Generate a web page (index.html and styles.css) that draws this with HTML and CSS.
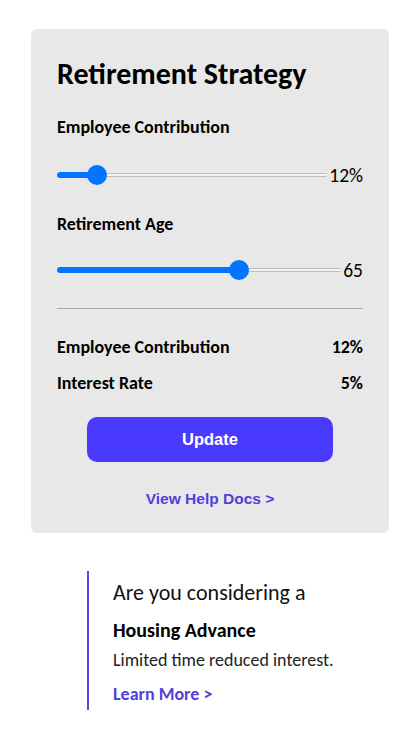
FILE: index.html
```html
<!DOCTYPE html>
<html lang="en">
<head>
<meta charset="utf-8">
<title>Retirement Strategy</title>
<link rel="stylesheet" href="styles.css">
</head>
<body>
  <section class="card">
    <h1 class="title">Retirement Strategy</h1>
    <label class="label label-first" for="contrib">Employee Contribution</label>
    <div class="slider-row slider-first">
      <input class="range" id="contrib" type="range" min="0" max="100" value="12" style="--fill: 12%">
      <span class="value">12%</span>
    </div>
    <label class="label label-second" for="age">Retirement Age</label>
    <div class="slider-row slider-second">
      <input class="range" id="age" type="range" min="0" max="100" value="65" style="--fill: 65%">
      <span class="value">65</span>
    </div>
    <hr class="divider">
    <div class="summary-row summary-first"><span>Employee Contribution</span><span>12%</span></div>
    <div class="summary-row summary-second"><span>Interest Rate</span><span>5%</span></div>
    <button class="update" type="button">Update</button>
    <a class="help" href="#">View Help Docs &gt;</a>
  </section>

  <aside class="promo">
    <p class="promo-lead">Are you considering a</p>
    <p class="promo-title">Housing Advance</p>
    <p class="promo-text">Limited time reduced interest.</p>
    <a class="promo-link" href="#">Learn More &gt;</a>
  </aside>
</body>
</html>
```

FILE: styles.css
```css
* { box-sizing: border-box; }

body {
  margin: 0;
  width: 412px;
  background: #ffffff;
  font-family: "Carlito", "Lato", sans-serif;
  color: #000;
}

.card {
  margin: 29px 0 0 31px;
  width: 358px;
  background: #e8e8e8;
  border-radius: 6px;
  padding: 27px 26px 24px 26px;
  display: flex;
  flex-direction: column;
}

.title {
  margin: 0;
  font-size: 30px;
  line-height: 36px;
  font-weight: 700;
}

.label {
  display: block;
  font-size: 18px;
  line-height: 22px;
  font-weight: 700;
}

.label-first { margin-top: 24px; }
.label-second { margin-top: 26px; }

.slider-row {
  display: flex;
  align-items: center;
  gap: 2px;
  height: 24px;
}

.slider-first { margin-top: 25px; }
.slider-second { margin-top: 23px; }

.value {
  font-size: 19.5px;
  line-height: 24px;
}

.range {
  -webkit-appearance: none;
  appearance: none;
  flex: 1;
  min-width: 0;
  height: 20px;
  margin: 0;
  background: transparent;
}

.range::-webkit-slider-runnable-track {
  height: 6px;
  border-radius: 3px;
  background:
    linear-gradient(#0075ff, #0075ff) left center / var(--fill) 100% no-repeat,
    linear-gradient(to bottom,
      transparent 0, transparent 1px,
      #bdbdbd 1px, #bdbdbd 2px,
      #f2f2f2 2px, #f2f2f2 4px,
      #bdbdbd 4px, #bdbdbd 5px,
      transparent 5px);
}

.range::-webkit-slider-thumb {
  -webkit-appearance: none;
  appearance: none;
  width: 20px;
  height: 20px;
  margin-top: -7px;
  border: none;
  border-radius: 50%;
  background: #0075ff;
}

.divider {
  margin: 26px 0 0 0;
  border: none;
  height: 1px;
  background: #a9a9a9;
}

.summary-row {
  display: flex;
  justify-content: space-between;
  font-size: 18px;
  line-height: 22px;
  font-weight: 700;
}

.summary-first { margin-top: 27px; }
.summary-second { margin-top: 14px; }

.update {
  margin: 23px 30px 0 30px;
  height: 45px;
  border: none;
  border-radius: 10px;
  background: #4a3aff;
  color: #fff;
  font-family: "Liberation Sans", Arial, sans-serif;
  font-size: 16.5px;
  font-weight: 700;
}

.help {
  margin-top: 27px;
  align-self: center;
  color: #5140dc;
  text-decoration: none;
  font-family: "Liberation Sans", Arial, sans-serif;
  font-size: 15.5px;
  line-height: 20px;
  font-weight: 700;
}

.promo {
  margin: 38px 0 0 87px;
  width: 280px;
  border-left: 2px solid #5a46e8;
  padding: 8px 0 4px 24px;
  display: flex;
  flex-direction: column;
  align-items: flex-start;
}

.promo p { margin: 0; }

.promo .promo-lead {
  font-size: 22px;
  line-height: 28px;
  color: #111;
}

.promo .promo-title {
  margin-top: 10px;
  font-size: 20px;
  line-height: 26px;
  font-weight: 700;
}

.promo .promo-text {
  margin-top: 5px;
  font-size: 18px;
  line-height: 24px;
  color: #222;
}

.promo-link {
  margin-top: 10px;
  font-size: 18px;
  line-height: 24px;
  font-weight: 700;
  color: #5140dc;
  text-decoration: none;
}
```
